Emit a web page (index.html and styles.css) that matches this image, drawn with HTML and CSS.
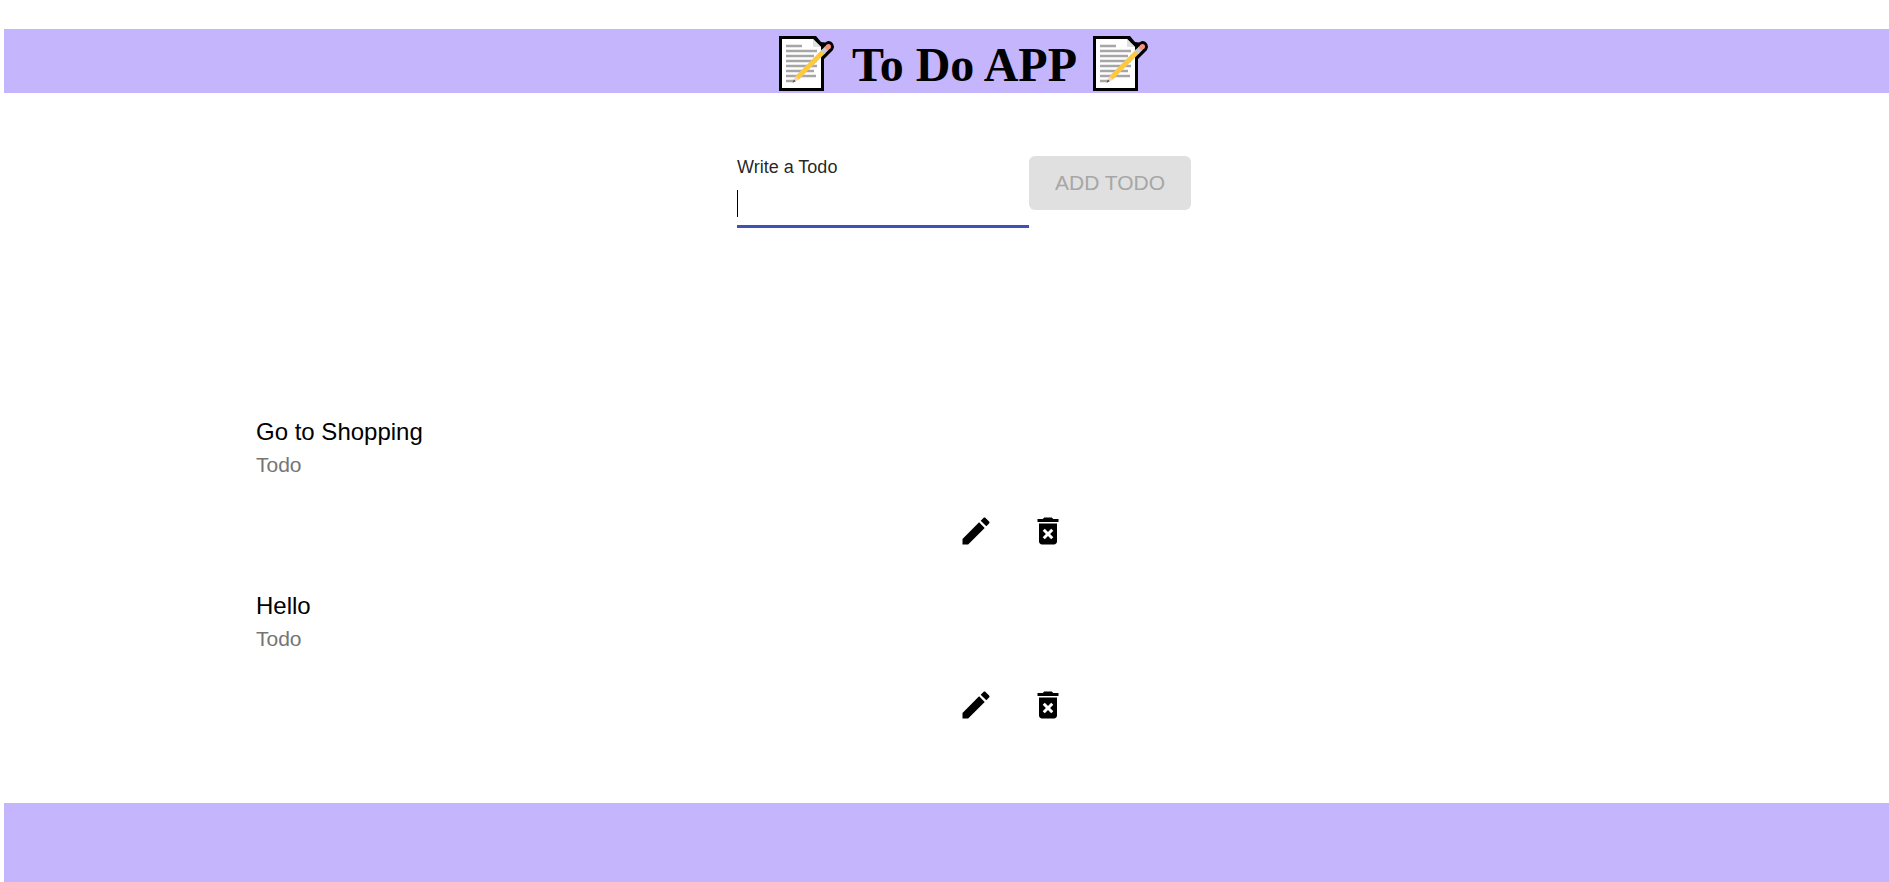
FILE: index.html
```html
<!DOCTYPE html>
<html lang="en">
<head>
  <meta charset="utf-8">
  <meta name="viewport" content="width=device-width, initial-scale=1">
  <title>To Do APP</title>
  <link rel="stylesheet" href="styles.css">
</head>
<body>
  <svg class="sprite" aria-hidden="true">
    <symbol id="memo" viewBox="0 0 56 56">
      <path d="M0 0H37L42 6L46 6.500L49 5A5.800 5.800 0 0 1 54 14L45 23V55H0Z" fill="#000"/>
      <path d="M3 3H34L42 11V52H3Z" fill="#fff"/>
      <path d="M34 3V11H42Z" fill="#e0e0e0"/>
      <path d="M7 10H23M7 15H38M7 20H35M7 25H38M7 30H38M7 35H35M7 40H37M7 45H15" stroke="#a6a6a6" stroke-width="2.500" fill="none"/>
      <path d="M18 42L45 15" stroke="#ffc83d" stroke-width="5"/>
      <path d="M43.500 16.500L47.500 12.500" stroke="#cacaca" stroke-width="5"/>
      <path d="M47 13L49.500 10.500" stroke="#f8917f" stroke-width="5"/>
      <circle cx="49.500" cy="10.500" r="2.500" fill="#f8917f"/>
      <path d="M16.200 40.200L19.800 43.800L14 46.500Z" fill="#f3d2bd"/>
      <path d="M14.800 43.500L16.800 45.300L13.500 46.700Z" fill="#555"/>
    </symbol>
    <symbol id="edit" viewBox="0 0 24 24">
      <path d="M3 17.250V21h3.750L17.810 9.940l-3.750-3.750L3 17.250zM20.710 7.040c.39-.39.39-1.020 0-1.410l-2.340-2.340c-.39-.39-1.020-.39-1.410 0l-1.830 1.830 3.750 3.750 1.830-1.830z"/>
    </symbol>
    <symbol id="delete" viewBox="0 0 24 24">
      <path d="M6 19c0 1.100.9 2 2 2h8c1.100 0 2-.9 2-2V7H6v12zm2.460-7.120l1.410-1.410L12 12.590l2.120-2.120 1.410 1.410L13.410 14l2.120 2.120-1.410 1.410L12 15.410l-2.120 2.120-1.410-1.410L10.590 14l-2.130-2.120zM15.500 4l-1-1h-5l-1 1H5v2h14V4z"/>
    </symbol>
  </svg>
  <div class="page">
    <header class="banner">
      <svg class="memo" aria-hidden="true"><use href="#memo"/></svg>
      <h1 class="title">To Do APP</h1>
      <svg class="memo" aria-hidden="true"><use href="#memo"/></svg>
    </header>
    <main class="content">
      <form class="todo-form">
        <div class="field">
          <label class="field-label" for="todo">Write a Todo</label>
          <div class="field-control">
            <input class="field-input" id="todo" type="text" autocomplete="off">
            <span class="caret"></span>
          </div>
        </div>
        <button class="add-button" type="submit" disabled>ADD TODO</button>
      </form>
      <ul class="todo-list">
        <li class="todo">
          <p class="todo-name">Go to Shopping</p>
          <p class="todo-kind">Todo</p>
          <div class="todo-actions">
            <button class="icon-button" type="button" aria-label="Edit"><svg class="icon"><use href="#edit"/></svg></button>
            <button class="icon-button" type="button" aria-label="Delete"><svg class="icon"><use href="#delete"/></svg></button>
          </div>
        </li>
        <li class="todo">
          <p class="todo-name">Hello</p>
          <p class="todo-kind">Todo</p>
          <div class="todo-actions">
            <button class="icon-button" type="button" aria-label="Edit"><svg class="icon"><use href="#edit"/></svg></button>
            <button class="icon-button" type="button" aria-label="Delete"><svg class="icon"><use href="#delete"/></svg></button>
          </div>
        </li>
      </ul>
    </main>
    <footer class="footer"></footer>
  </div>
</body>
</html>
```

FILE: styles.css
```css
* {
  box-sizing: border-box;
}

body {
  margin: 0;
  overflow: hidden;
  background: #fff;
  color: #000;
  font-family: "Liberation Sans", Arial, sans-serif;
}

.sprite {
  display: none;
}

.page {
  display: flex;
  flex-direction: column;
  width: calc(100% + 31px);
  min-height: 100vh;
  margin-left: 4px;
  padding-top: 29px;
}

.banner {
  display: flex;
  justify-content: center;
  align-items: center;
  gap: 16px;
  height: 64px;
  padding-top: 6px;
  background: #c4b5fd;
}

.memo {
  width: 56px;
  height: 56px;
}

.title {
  margin: 0;
  padding: 2px 0 0 1px;
  font: bold 48px/56px "Liberation Serif", "Times New Roman", serif;
}

.content {
  padding: 63px 252px 41px;
}

.todo-form {
  display: flex;
  justify-content: center;
  align-items: flex-start;
  min-height: 258px;
}

.field {
  width: 292px;
}

.field-label {
  display: block;
  color: rgba(0, 0, 0, 0.87);
  font-size: 18px;
  line-height: 22px;
}

.field-control {
  position: relative;
}

.field-input {
  display: block;
  width: 100%;
  height: 50px;
  padding: 8px 0;
  border: 0;
  border-bottom: 3px solid #3f51b5;
  outline: 0;
  background: transparent;
  font: 24px/28px "Liberation Sans", Arial, sans-serif;
}

.caret {
  position: absolute;
  top: 12px;
  left: 0;
  width: 1px;
  height: 27px;
  background: #000;
}

.add-button {
  width: 162px;
  height: 54px;
  padding: 0;
  border: 0;
  border-radius: 6px;
  background: #e0e0e0;
  color: #a6a6a6;
  font: 21px/36px "Liberation Sans", Arial, sans-serif;
}

.todo-list {
  margin: 0;
  padding: 0;
  list-style: none;
}

.todo {
  padding-bottom: 21px;
}

.todo-name,
.todo-kind {
  margin: 0;
}

.todo-name {
  font-size: 24px;
  line-height: 36px;
}

.todo-kind {
  color: #757575;
  font-size: 21px;
  line-height: 30px;
}

.todo-actions {
  display: flex;
  justify-content: center;
  padding: 15px 0 0 95px;
}

.icon-button {
  display: flex;
  padding: 18px;
  border: 0;
  background: transparent;
  color: #000;
}

.icon {
  width: 36px;
  height: 36px;
  fill: currentColor;
}

.footer {
  flex: 1;
  min-height: 79px;
  background: #c4b5fd;
}
```
